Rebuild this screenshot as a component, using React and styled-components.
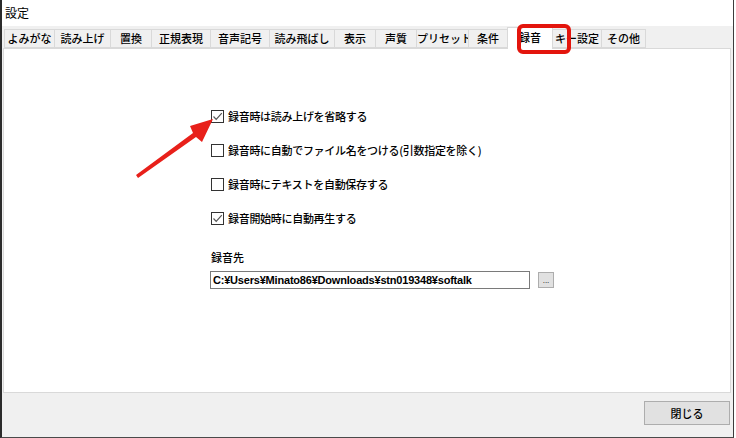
import React from "react";
import styled, { createGlobalStyle } from "styled-components";

const tabs = [
  { label: "よみがな", w: 51 },
  { label: "読み上げ", w: 57 },
  { label: "置換", w: 42 },
  { label: "正規表現", w: 60 },
  { label: "音声記号", w: 60 },
  { label: "読み飛ばし", w: 66 },
  { label: "表示", w: 42 },
  { label: "声質", w: 42 },
  { label: "プリセット", w: 53 },
  { label: "条件", w: 40 },
  { label: "録音", w: 46, active: true },
  { label: "キー設定", w: 50 },
  { label: "その他", w: 45 }
];

const options = [
  { label: "録音時は読み上げを省略する", checked: true },
  { label: "録音時に自動でファイル名をつける(引数指定を除く)", checked: false },
  { label: "録音時にテキストを自動保存する", checked: false },
  { label: "録音開始時に自動再生する", checked: true }
];

const GlobalStyle = createGlobalStyle`
  body {
    margin: 0;
    background: #ffffff;
    font-family: "Noto Sans CJK JP", "Noto Sans", sans-serif;
  }
`;

export default function App() {
  return (
    <>
      <GlobalStyle />
      <Window>
        <TitleBar>設定</TitleBar>
        <TabStrip>
          {tabs.map(t => (
            <Tab key={t.label} $w={t.w} $active={t.active}>
              {t.label}
            </Tab>
          ))}
        </TabStrip>
        <Panel>
          <OptionList>
            {options.map(o => (
              <Option key={o.label}>
                <Box>
                  {o.checked && (
                    <svg width="11" height="11" viewBox="0 0 11 11">
                      <polyline
                        points="1.5,5.5 4.2,8.3 9.8,2.2"
                        fill="none"
                        stroke="#555"
                        strokeWidth="1.2"
                      />
                    </svg>
                  )}
                </Box>
                <OptionLabel>{o.label}</OptionLabel>
              </Option>
            ))}
          </OptionList>
          <Field>
            <FieldLabel>録音先</FieldLabel>
            <PathRow>
              <PathInput>C:¥Users¥Minato86¥Downloads¥stn019348¥softalk</PathInput>
              <Browse>...</Browse>
            </PathRow>
          </Field>
        </Panel>
        <Footer>
          <CloseButton>閉じる</CloseButton>
        </Footer>
        <Highlight />
        <Arrow width="736" height="438" viewBox="0 0 736 438">
          <polygon
            points="136,175 193,133 190,126 213,119 202,142 196,137 138,178"
            fill="#e8201a"
          />
        </Arrow>
      </Window>
    </>
  );
}

const Window = styled.div`
  position: relative;
  width: 734px;
  height: 438px;
  box-sizing: border-box;
  background: #f0f0f0;
  border-left: 2px solid #2b2b2b;
  border-right: 1px solid #3c3c3c;
  border-bottom: 1px solid #4a4a4a;
  display: flex;
  flex-direction: column;
  overflow: hidden;
`;

const TitleBar = styled.div`
  height: 26px;
  background: #ffffff;
  padding-left: 3px;
  font-size: 12px;
  line-height: 26px;
  color: #000;
`;

const TabStrip = styled.div`
  display: flex;
  align-items: flex-end;
  height: 22px;
  padding-left: 2px;
  position: relative;
  z-index: 1;
`;

const Tab = styled.div`
  width: ${p => p.$w}px;
  box-sizing: border-box;
  height: ${p => (p.$active ? 22 : 19)}px;
  margin-bottom: ${p => (p.$active ? -1 : 0)}px;
  border: 1px solid #d9d9d9;
  border-left-width: 1px;
  margin-left: -1px;
  border-bottom: ${p => (p.$active ? "none" : "1px solid #d9d9d9")};
  background: ${p => (p.$active ? "#ffffff" : "#f0f0f0")};
  font-size: 11px;
  font-weight: 500;
  line-height: ${p => (p.$active ? 19 : 17)}px;
  text-align: center;
  color: #000;
  white-space: nowrap;
  &:first-child {
    margin-left: 0;
  }
`;

const Panel = styled.div`
  margin: 0 2px 0 1px;
  height: 345px;
  box-sizing: border-box;
  background: #ffffff;
  border: 1px solid #d9d9d9;
  padding: 60px 0 0 207px;
`;

const OptionList = styled.div`
  display: flex;
  flex-direction: column;
  gap: 20px;
`;

const Option = styled.div`
  display: flex;
  align-items: center;
  gap: 4px;
  height: 14px;
`;

const Box = styled.div`
  width: 13px;
  height: 13px;
  box-sizing: border-box;
  border: 1px solid #333;
  background: #fff;
  display: flex;
  align-items: center;
  justify-content: center;
`;

const OptionLabel = styled.span`
  font-size: 11px;
  font-weight: 500;
  color: #000;
  letter-spacing: -0.3px;
`;

const Field = styled.div`
  margin-top: 24px;
  display: flex;
  flex-direction: column;
  gap: 6px;
`;

const FieldLabel = styled.div`
  font-size: 11px;
  font-weight: 500;
  color: #000;
  line-height: 16px;
`;

const PathRow = styled.div`
  display: flex;
  align-items: center;
  gap: 8px;
  margin-left: -1px;
`;

const PathInput = styled.div`
  width: 320px;
  height: 18px;
  box-sizing: border-box;
  border: 1px solid #7a7a7a;
  padding: 0 2px;
  font-family: "Liberation Sans", Arial, sans-serif;
  font-size: 11px;
  font-weight: bold;
  line-height: 16px;
  color: #000;
  letter-spacing: -0.2px;
`;

const Browse = styled.div`
  width: 16px;
  height: 16px;
  box-sizing: border-box;
  border: 1px solid #adadad;
  background: #e1e1e1;
  font-family: "Liberation Sans", Arial, sans-serif;
  font-size: 8px;
  line-height: 16px;
  text-align: center;
  color: #000;
`;

const Footer = styled.div`
  flex: 1;
  display: flex;
  justify-content: flex-end;
  align-items: flex-start;
  padding: 8px 3px 0 0;
`;

const CloseButton = styled.div`
  width: 86px;
  height: 24px;
  box-sizing: border-box;
  border: 1px solid #adadad;
  background: #e1e1e1;
  font-size: 11px;
  font-weight: 500;
  line-height: 22px;
  text-align: center;
  color: #000;
`;

const Highlight = styled.div`
  position: absolute;
  left: 515px;
  top: 24px;
  width: 54px;
  height: 30px;
  box-sizing: border-box;
  border: 4px solid #e3150d;
  border-radius: 6px;
  z-index: 2;
`;

const Arrow = styled.svg`
  position: absolute;
  left: -2px;
  top: 0;
  z-index: 3;
  pointer-events: none;
`;
